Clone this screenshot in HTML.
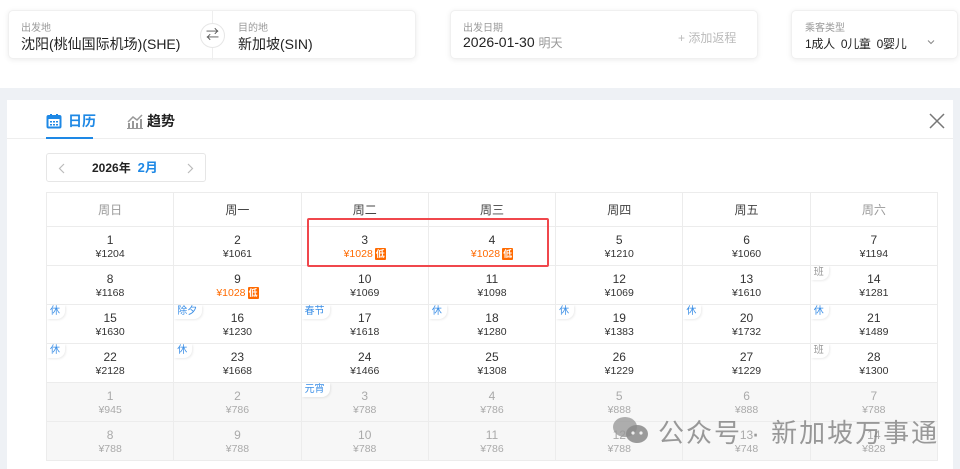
<!DOCTYPE html>
<html><head><meta charset="utf-8"><style>
*{box-sizing:border-box;margin:0;padding:0}
body{width:960px;height:469px;overflow:hidden;background:#fff;font-family:"Liberation Sans","Noto Sans CJK SC",sans-serif;position:relative;color:#333}
.card{position:absolute;background:#fff;border-radius:5px;box-shadow:0 1px 6px rgba(0,0,0,.08);border:1px solid #f0f0f0}
.lbl{position:absolute;font-size:10px;color:#999}
.val{position:absolute;font-size:14px;color:#222;white-space:nowrap}
.band{position:absolute;left:0;top:88px;width:960px;height:381px;background:#eef1f5}
.panel{position:absolute;left:7px;top:100px;width:946px;height:369px;background:#fff}
table{position:absolute;left:46px;top:192px;width:892px;border-collapse:collapse;table-layout:fixed}
td{border:1px solid #ececec;text-align:center;height:39px;position:relative;vertical-align:top}
th{border:1px solid #ececec;height:34px;font-weight:normal;font-size:12px;color:#444}
td .n{font-size:12px;color:#333;margin-top:6px;line-height:14px}
td .p{font-size:10.5px;color:#333;line-height:14px}
td.g{background:#f7f7f7}
td.g .n,td.g .p{color:#aaa}
.lo{color:#ff6a00!important}
.lo b{display:inline-block;background:#ff6a00;color:#fff;font-size:9px;font-weight:bold;padding:0 1px;line-height:12px;border-radius:1px;margin-left:2px}
.tag{position:absolute;left:0;top:0;font-size:10px;color:#3a8ee6;background:#fff;padding:0 5px 1px 3px;line-height:13px;border-radius:0 0 8px 0;box-shadow:1px 1px 2px rgba(0,0,0,.08)}
.tag.b{color:#999}
</style></head><body>
<div class="card" style="left:8px;top:10px;width:408px;height:49px">
<div class="lbl" style="left:12px;top:8px">出发地</div>
<div class="val" style="left:12px;top:23px">沈阳(桃仙国际机场)(SHE)</div>
<div style="position:absolute;left:203px;top:0;width:1px;height:49px;background:#eee"></div>
<div style="position:absolute;left:191px;top:12px;width:25px;height:25px;border-radius:50%;background:#fff;border:1px solid #e6e6e6;font-size:13px;text-align:center;line-height:22px;color:#555">⇄</div>
<div class="lbl" style="left:229px;top:8px">目的地</div>
<div class="val" style="left:229px;top:23px">新加坡(SIN)</div>
</div>
<div class="card" style="left:450px;top:10px;width:308px;height:49px">
<div class="lbl" style="left:12px;top:8px">出发日期</div>
<div class="val" style="left:12px;top:23px">2026-01-30 <span style="font-size:12px;color:#999">明天</span></div>
<div style="position:absolute;left:227px;top:18px;font-size:12px;color:#bbb">+ 添加返程</div>
</div>
<div class="card" style="left:791px;top:10px;width:167px;height:49px">
<div class="lbl" style="left:13px;top:8px">乘客类型</div>
<div style="position:absolute;left:13px;top:24px;font-size:12px;color:#222;white-space:nowrap;letter-spacing:-.3px">1成人&nbsp;&nbsp;0儿童&nbsp;&nbsp;0婴儿</div>
<svg style="position:absolute;left:135px;top:28px" width="8" height="6" viewBox="0 0 8 6"><path d="M1 1.5 L4 4.5 L7 1.5" stroke="#888" fill="none" stroke-width="1"/></svg>
</div>
<div class="band"></div>
<div class="panel">
<div style="position:absolute;left:0;top:38px;width:946px;height:1px;background:#eee"></div>
<div style="position:absolute;left:39px;top:37px;width:47px;height:2px;background:#1e88e5"></div>
<svg style="position:absolute;left:39px;top:13px" width="16" height="16" viewBox="0 0 16 16"><rect x="1.5" y="3" width="13" height="11.5" rx="1" fill="none" stroke="#1e88e5" stroke-width="2"/><rect x="1.5" y="3" width="13" height="3" fill="#1e88e5"/><rect x="4" y="1" width="2" height="3" fill="#1e88e5"/><rect x="10" y="1" width="2" height="3" fill="#1e88e5"/><g fill="#1e88e5"><rect x="4" y="8" width="2" height="1.5"/><rect x="7" y="8" width="2" height="1.5"/><rect x="10" y="8" width="2" height="1.5"/><rect x="4" y="11" width="2" height="1.5"/><rect x="7" y="11" width="2" height="1.5"/><rect x="10" y="11" width="2" height="1.5"/></g></svg>
<div style="position:absolute;left:61px;top:11px;font-size:14px;font-weight:bold;color:#1e88e5">日历</div>
<svg style="position:absolute;left:120px;top:13px" width="16" height="16" viewBox="0 0 16 16"><g fill="#999"><rect x="1" y="10" width="2" height="5"/><rect x="5" y="8" width="2" height="7"/><rect x="9" y="10" width="2" height="5"/><rect x="13" y="6" width="2" height="9"/><rect x="0" y="15" width="16" height="1"/></g><path d="M1 9 L6 4 L10 7 L15 2" stroke="#999" stroke-width="1.5" fill="none"/></svg>
<div style="position:absolute;left:140px;top:11px;font-size:14px;font-weight:bold;color:#222">趋势</div>
<svg style="position:absolute;left:922px;top:13px" width="16" height="16" viewBox="0 0 16 16"><path d="M1 1 L15 15 M15 1 L1 15" stroke="#777" stroke-width="1.5"/></svg>
<div style="position:absolute;left:39px;top:53px;width:160px;height:29px;border:1px solid #e6e6e6;border-radius:3px">
<svg style="position:absolute;left:11px;top:9px" width="7" height="11" viewBox="0 0 7 11"><path d="M6 1 L1.5 5.5 L6 10" stroke="#bbb" fill="none" stroke-width="1.2"/></svg>
<span style="position:absolute;left:45px;top:0;line-height:27px;font-size:12px;font-weight:bold;color:#222;white-space:nowrap">2026年 <span style="color:#1e88e5;font-size:13px">&nbsp;2月</span></span>
<svg style="position:absolute;left:140px;top:9px" width="7" height="11" viewBox="0 0 7 11"><path d="M1 1 L5.5 5.5 L1 10" stroke="#bbb" fill="none" stroke-width="1.2"/></svg>
</div>
</div>
<table>
<tr><th style="color:#999">周日</th><th>周一</th><th>周二</th><th>周三</th><th>周四</th><th>周五</th><th style="color:#999">周六</th></tr>
<tr><td><div class="n">1</div><div class="p">¥1204</div></td><td><div class="n">2</div><div class="p">¥1061</div></td><td><div class="n">3</div><div class="p lo">¥1028<b>低</b></div></td><td><div class="n">4</div><div class="p lo">¥1028<b>低</b></div></td><td><div class="n">5</div><div class="p">¥1210</div></td><td><div class="n">6</div><div class="p">¥1060</div></td><td><div class="n">7</div><div class="p">¥1194</div></td></tr>
<tr><td><div class="n">8</div><div class="p">¥1168</div></td><td><div class="n">9</div><div class="p lo">¥1028<b>低</b></div></td><td><div class="n">10</div><div class="p">¥1069</div></td><td><div class="n">11</div><div class="p">¥1098</div></td><td><div class="n">12</div><div class="p">¥1069</div></td><td><div class="n">13</div><div class="p">¥1610</div></td><td><span class="tag b">班</span><div class="n">14</div><div class="p">¥1281</div></td></tr>
<tr><td><span class="tag">休</span><div class="n">15</div><div class="p">¥1630</div></td><td><span class="tag">除夕</span><div class="n">16</div><div class="p">¥1230</div></td><td><span class="tag">春节</span><div class="n">17</div><div class="p">¥1618</div></td><td><span class="tag">休</span><div class="n">18</div><div class="p">¥1280</div></td><td><span class="tag">休</span><div class="n">19</div><div class="p">¥1383</div></td><td><span class="tag">休</span><div class="n">20</div><div class="p">¥1732</div></td><td><span class="tag">休</span><div class="n">21</div><div class="p">¥1489</div></td></tr>
<tr><td><span class="tag">休</span><div class="n">22</div><div class="p">¥2128</div></td><td><span class="tag">休</span><div class="n">23</div><div class="p">¥1668</div></td><td><div class="n">24</div><div class="p">¥1466</div></td><td><div class="n">25</div><div class="p">¥1308</div></td><td><div class="n">26</div><div class="p">¥1229</div></td><td><div class="n">27</div><div class="p">¥1229</div></td><td><span class="tag b">班</span><div class="n">28</div><div class="p">¥1300</div></td></tr>
<tr><td class="g"><div class="n">1</div><div class="p">¥945</div></td><td class="g"><div class="n">2</div><div class="p">¥786</div></td><td class="g"><span class="tag">元宵</span><div class="n">3</div><div class="p">¥788</div></td><td class="g"><div class="n">4</div><div class="p">¥786</div></td><td class="g"><div class="n">5</div><div class="p">¥888</div></td><td class="g"><div class="n">6</div><div class="p">¥888</div></td><td class="g"><div class="n">7</div><div class="p">¥788</div></td></tr>
<tr><td class="g"><div class="n">8</div><div class="p">¥788</div></td><td class="g"><div class="n">9</div><div class="p">¥788</div></td><td class="g"><div class="n">10</div><div class="p">¥788</div></td><td class="g"><div class="n">11</div><div class="p">¥786</div></td><td class="g"><div class="n">12</div><div class="p">¥788</div></td><td class="g"><div class="n">13</div><div class="p">¥748</div></td><td class="g"><div class="n">14</div><div class="p">¥828</div></td></tr>
</table>
<div style="position:absolute;left:307px;top:218px;width:242px;height:49px;border:2px solid #f0474c;border-radius:2px"></div>
<svg style="position:absolute;left:612px;top:416px" width="38" height="30" viewBox="0 0 38 30"><ellipse cx="13" cy="11" rx="12" ry="10" fill="#9a9a9a" opacity=".8"/><ellipse cx="25" cy="18" rx="11" ry="9" fill="#8a8a8a" opacity=".85"/><circle cx="21" cy="17" r="1.6" fill="#eee"/><circle cx="29" cy="17" r="1.6" fill="#eee"/></svg>
<div style="position:absolute;left:658px;top:413px;font-size:26px;color:rgba(120,120,120,.75);letter-spacing:2px;white-space:nowrap">公众号 · 新加坡万事通</div>
</body></html>
